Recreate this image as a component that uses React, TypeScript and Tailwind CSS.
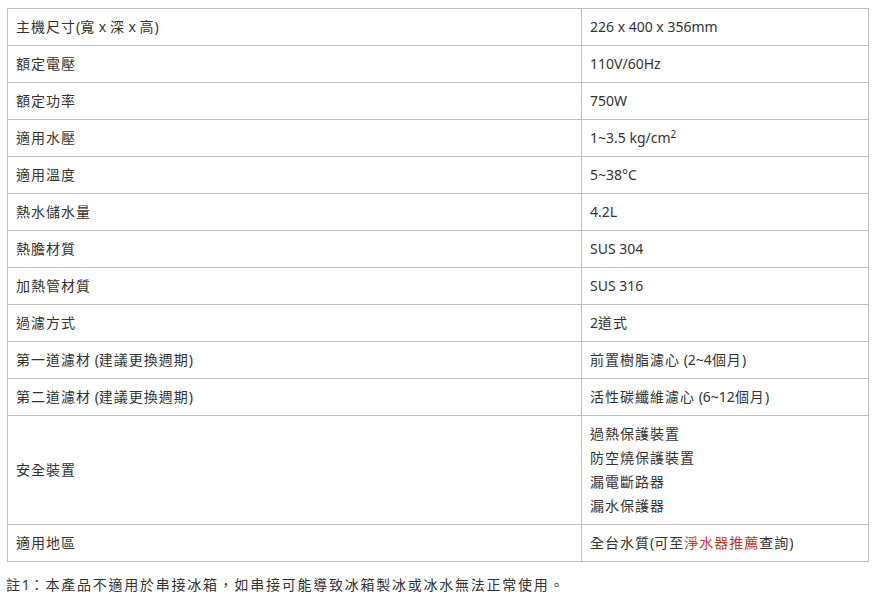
import React from "react";

function T({ s, t = "tracking-[1px]" }: { s: string; t?: string }) {
  const parts = s.split(/([\u3000-\u9fff\uff00-\uffef]+)/);
  return (
    <>
      {parts.map((p, i) =>
        i % 2 === 1 ? (
          <span key={i} className={t}>
            {p}
          </span>
        ) : (
          <React.Fragment key={i}>{p}</React.Fragment>
        )
      )}
    </>
  );
}

const rows: [string, React.ReactNode][] = [
  ["主機尺寸(寬 x 深 x 高)", "226 x 400 x 356mm"],
  ["額定電壓", "110V/60Hz"],
  ["額定功率", "750W"],
  ["適用水壓", <>1~3.5 kg/cm<sup className="text-[10px]">2</sup></>],
  ["適用溫度", "5~38°C"],
  ["熱水儲水量", "4.2L"],
  ["熱膽材質", "SUS 304"],
  ["加熱管材質", "SUS 316"],
  ["過濾方式", "2道式"],
  ["第一道濾材 (建議更換週期)", "前置樹脂濾心 (2~4個月)"],
  ["第二道濾材 (建議更換週期)", "活性碳纖維濾心 (6~12個月)"],
  [
    "安全裝置",
    <>
      <div><T s="過熱保護裝置" /></div>
      <div><T s="防空燒保護裝置" /></div>
      <div><T s="漏電斷路器" /></div>
      <div><T s="漏水保護器" /></div>
    </>,
  ],
  [
    "適用地區",
    <>
      <T s="全台水質(可至" />
      <span className="text-[#c0392b]"><T s="淨水器推薦" /></span>
      <T s="查詢)" />
    </>,
  ],
];

export default function App() {
  return (
    <div
      className="w-[878px] h-[597px] bg-white text-[#333] text-[14px] leading-[24px] pt-[8px] pl-[7px]"
      style={{ fontFamily: '"Noto Sans", "Noto Sans CJK TC", sans-serif' }}
    >
      <table className="w-[862px] border-collapse">
        <tbody>
          {rows.map(([k, v], i) => (
            <tr key={i}>
              <td className="w-[574px] border border-[#bfbfbf] px-[8px] py-[6px] align-middle">
                <T s={k} />
              </td>
              <td className="border border-[#bfbfbf] px-[8px] py-[6px] align-middle">
                {typeof v === "string" ? <T s={v} /> : v}
              </td>
            </tr>
          ))}
        </tbody>
      </table>
      <div className="mt-[11px] -ml-[1px]">
        <T s="註1：本產品不適用於串接冰箱，如串接可能導致冰箱製冰或冰水無法正常使用。" t="tracking-[1.75px]" />
      </div>
    </div>
  );
}
